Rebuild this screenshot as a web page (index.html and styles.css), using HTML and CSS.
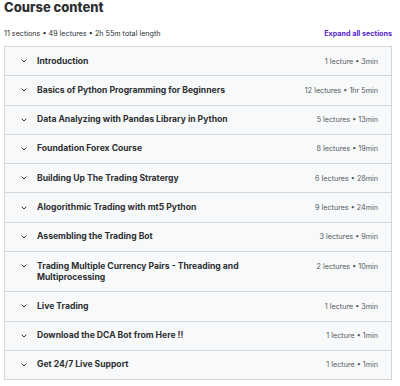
FILE: index.html
```html
<!DOCTYPE html>
<html>
<head>
<meta charset="utf-8">
<link rel="stylesheet" href="styles.css">
</head>
<body>
<div class="page">
  <h2 class="title">Course content</h2>
  <div class="meta">
    <span>11 sections • 49 lectures • 2h 55m total length</span>
    <span class="expand">Expand all sections</span>
  </div>
  <div class="box">
    <div class="row"><span class="chev"><svg viewBox="0 0 6 4" width="6" height="4"><path d="M0.6 0.6 L3 3 L5.4 0.6" fill="none" stroke="#2d2f31" stroke-width="1"/></svg></span><span class="name">Introduction</span><span class="sum">1 lecture • 3min</span></div>
    <div class="row"><span class="chev"><svg viewBox="0 0 6 4" width="6" height="4"><path d="M0.6 0.6 L3 3 L5.4 0.6" fill="none" stroke="#2d2f31" stroke-width="1"/></svg></span><span class="name">Basics of Python Programming for Beginners</span><span class="sum">12 lectures • 1hr 5min</span></div>
    <div class="row"><span class="chev"><svg viewBox="0 0 6 4" width="6" height="4"><path d="M0.6 0.6 L3 3 L5.4 0.6" fill="none" stroke="#2d2f31" stroke-width="1"/></svg></span><span class="name">Data Analyzing with Pandas Library in Python</span><span class="sum">5 lectures • 13min</span></div>
    <div class="row"><span class="chev"><svg viewBox="0 0 6 4" width="6" height="4"><path d="M0.6 0.6 L3 3 L5.4 0.6" fill="none" stroke="#2d2f31" stroke-width="1"/></svg></span><span class="name">Foundation Forex Course</span><span class="sum">8 lectures • 19min</span></div>
    <div class="row"><span class="chev"><svg viewBox="0 0 6 4" width="6" height="4"><path d="M0.6 0.6 L3 3 L5.4 0.6" fill="none" stroke="#2d2f31" stroke-width="1"/></svg></span><span class="name">Building Up The Trading Stratergy</span><span class="sum">6 lectures • 28min</span></div>
    <div class="row"><span class="chev"><svg viewBox="0 0 6 4" width="6" height="4"><path d="M0.6 0.6 L3 3 L5.4 0.6" fill="none" stroke="#2d2f31" stroke-width="1"/></svg></span><span class="name">Alogorithmic Trading with mt5 Python</span><span class="sum">9 lectures • 24min</span></div>
    <div class="row"><span class="chev"><svg viewBox="0 0 6 4" width="6" height="4"><path d="M0.6 0.6 L3 3 L5.4 0.6" fill="none" stroke="#2d2f31" stroke-width="1"/></svg></span><span class="name">Assembling the Trading Bot</span><span class="sum">3 lectures • 9min</span></div>
    <div class="row"><span class="chev"><svg viewBox="0 0 6 4" width="6" height="4"><path d="M0.6 0.6 L3 3 L5.4 0.6" fill="none" stroke="#2d2f31" stroke-width="1"/></svg></span><span class="name">Trading Multiple Currency Pairs - Threading and Multiprocessing</span><span class="sum">2 lectures • 10min</span></div>
    <div class="row"><span class="chev"><svg viewBox="0 0 6 4" width="6" height="4"><path d="M0.6 0.6 L3 3 L5.4 0.6" fill="none" stroke="#2d2f31" stroke-width="1"/></svg></span><span class="name">Live Trading</span><span class="sum">1 lecture • 3min</span></div>
    <div class="row"><span class="chev"><svg viewBox="0 0 6 4" width="6" height="4"><path d="M0.6 0.6 L3 3 L5.4 0.6" fill="none" stroke="#2d2f31" stroke-width="1"/></svg></span><span class="name">Download the DCA Bot from Here !!</span><span class="sum">1 lecture • 1min</span></div>
    <div class="row"><span class="chev"><svg viewBox="0 0 6 4" width="6" height="4"><path d="M0.6 0.6 L3 3 L5.4 0.6" fill="none" stroke="#2d2f31" stroke-width="1"/></svg></span><span class="name">Get 24/7 Live Support</span><span class="sum">1 lecture • 1min</span></div>
  </div>
</div>
</body>
</html>
```
FILE: styles.css
```css
html, body {
  margin: 0;
  padding: 0;
  background: #ffffff;
}
body {
  font-family: Inter, "Noto Sans", sans-serif;
  color: #2d2f31;
}
.page {
  padding: 0 8px 0 4px;
}
.title {
  margin: 0;
  font-size: 13px;
  line-height: 14px;
  font-weight: 800;
  color: #2d2f31;
}
.meta {
  display: flex;
  justify-content: space-between;
  align-items: center;
  font-size: 7.2px;
  line-height: 10px;
  margin-top: 15px;
  margin-bottom: 7px;
}
.expand {
  color: #5624d0;
  font-weight: 700;
  margin-right: 0;
}
.box {
  border: 1px solid #d1d7dc;
}
.row {
  display: flex;
  align-items: flex-start;
  background: #f7f9fa;
  padding: 8.65px 13px 8.65px 16px;
  border-top: 1px solid #d1d7dc;
  font-size: 8.6px;
  line-height: 11px;
}
.row:first-child {
  border-top: none;
}
.chev {
  width: 16px;
  height: 11px;
  display: flex;
  align-items: center;
  flex: none;
}
.chev svg {
  display: block;
}
.name {
  flex: 1;
  font-weight: 700;
}
.sum {
  flex: none;
  margin-left: 22px;
  font-size: 7.2px;
  color: #55595c;
}
```
